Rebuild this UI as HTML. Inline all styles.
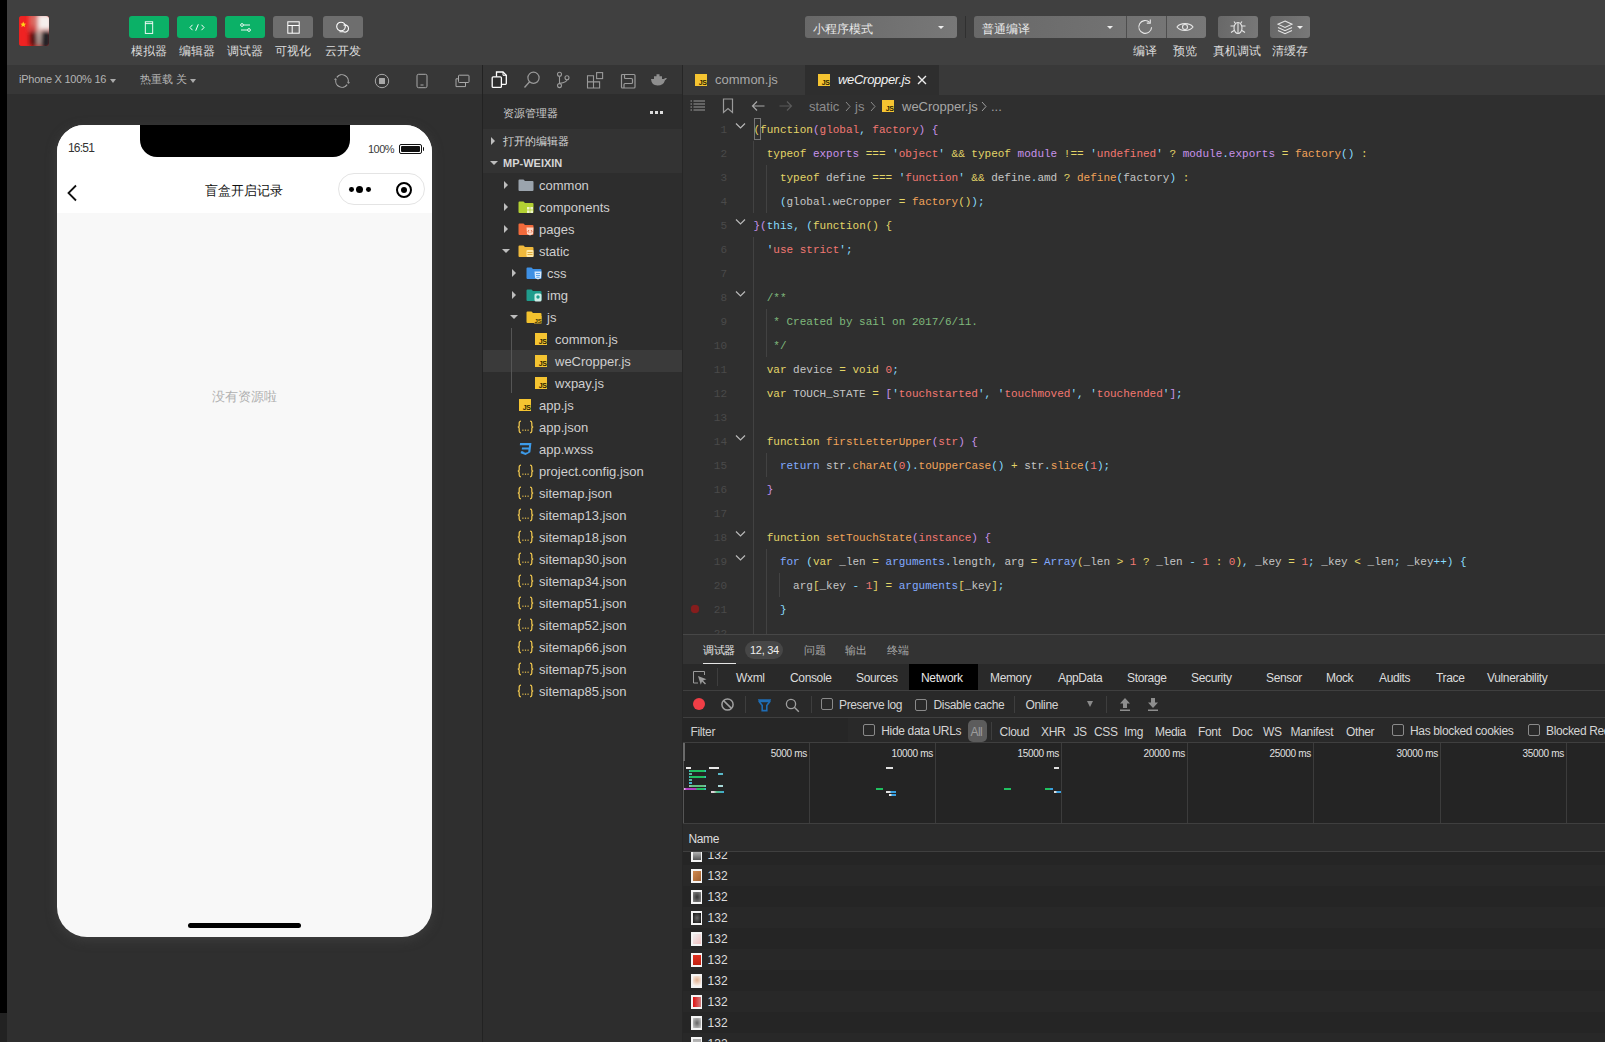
<!DOCTYPE html>
<html><head><meta charset="utf-8">
<style>
*{margin:0;padding:0;box-sizing:border-box}
html,body{width:1605px;height:1042px;overflow:hidden;background:#2f2f2f;font-family:"Liberation Sans",sans-serif;}
.a{position:absolute}
.t{position:absolute;white-space:nowrap}
#hdr{left:7px;top:0;width:1598px;height:65px;background:#404040}
.gbtn{position:absolute;top:16px;width:40px;height:22px;border-radius:3px;background:#0bb167}
.gbtn.g{background:#6e6e6e}
.lbl{position:absolute;top:44px;font-size:12px;line-height:14px;color:#dcdcdc;text-align:center}
.sel{position:absolute;top:16px;height:22px;background:linear-gradient(100deg,#686868,#787878);border-radius:3px}
#simbar{left:7px;top:65px;width:475px;height:29px;background:#373737}
#sim{left:7px;top:94px;width:475px;height:948px;background:#2f2f2f}
#side{left:482px;top:65px;width:201px;height:977px;background:#2b2b2b;border-left:1px solid #232323}
#tabs{left:683px;top:65px;width:922px;height:30px;background:#393939}
#ed{left:683px;top:95px;width:922px;height:539px;background:#2f2f2f}
#panel{left:683px;top:634px;width:922px;height:408px;background:#292929}
</style></head><body>
<div class="a" style="left:0;top:0;width:7px;height:1013px;background:#000"></div>
<div class="a" style="left:0;top:1013px;width:7px;height:29px;background:#222"></div>
<div id="hdr" class="a">
<svg class="a" style="left:12px;top:16px" width="30" height="30" viewBox="0 0 30 30"><defs><filter id="bl" x="-20%" y="-20%" width="140%" height="140%"><feGaussianBlur stdDeviation="2"/></filter><clipPath id="cp"><rect width="30" height="30" rx="3"/></clipPath></defs><g clip-path="url(#cp)"><rect width="30" height="30" fill="#d82a24"/><g filter="url(#bl)"><rect x="-2" y="-2" width="13" height="34" fill="#f02020"/><rect x="11" y="-2" width="10" height="14" fill="#d86a64"/><rect x="19" y="-2" width="14" height="16" fill="#f4eeec"/><path d="M10 30V16Q12 12 16 14L22 18V30Z" fill="#5a1418"/><path d="M22 16Q27 13 32 16V32H22Z" fill="#222226"/><path d="M18 12Q21 12 22 16L21 30H19Z" fill="#d8c8c0"/><rect x="9" y="10" width="8" height="6" fill="#d04040"/></g><path d="M4.2 5.6l0.9 1.9 2 0.2-1.5 1.3 0.5 2-1.9-1.1-1.8 1.1 0.5-2-1.5-1.3 2-0.2z" fill="#ffd21a"/></g></svg>
<div class="gbtn" style="left:122px"><svg class="a" style="left:15px;top:5px" width="10" height="13" viewBox="0 0 10 13"><rect x="1.3" y="0.8" width="7.4" height="11.6" fill="none" stroke="#fff" stroke-width="0.9"/><line x1="1.3" y1="2.6" x2="8.7" y2="2.6" stroke="#fff" stroke-width="0.9"/></svg></div>
<div class="gbtn" style="left:170px"><svg class="a" style="left:12px;top:8px" width="16" height="7" viewBox="0 0 16 7"><path d="M3.5 0.8L1 3.5l2.5 2.7M12.5 0.8L15 3.5l-2.5 2.7M9.3 0.3L6.7 6.7" fill="none" stroke="#fff" stroke-width="1"/></svg></div>
<div class="gbtn" style="left:218px"><svg class="a" style="left:15px;top:7px" width="11" height="9" viewBox="0 0 11 9"><circle cx="2" cy="2" r="1.4" fill="none" stroke="#fff" stroke-width="0.9"/><line x1="3.5" y1="2" x2="10" y2="2" stroke="#fff" stroke-width="0.9"/><circle cx="9" cy="7" r="1.4" fill="none" stroke="#fff" stroke-width="0.9"/><line x1="1" y1="7" x2="7.5" y2="7" stroke="#fff" stroke-width="0.9"/></svg></div>
<div class="gbtn g" style="left:266px"><svg class="a" style="left:14px;top:5px" width="13" height="13" viewBox="0 0 13 13"><rect x="0.8" y="0.8" width="11.4" height="11.4" fill="none" stroke="#fff" stroke-width="1"/><line x1="0.8" y1="4.5" x2="12.2" y2="4.5" stroke="#fff" stroke-width="1"/><line x1="5.2" y1="4.5" x2="5.2" y2="12.2" stroke="#fff" stroke-width="1"/></svg></div>
<div class="gbtn g" style="left:316px"><svg class="a" style="left:12px;top:5px" width="16" height="12" viewBox="0 0 16 12"><circle cx="6" cy="5.5" r="4.3" fill="none" stroke="#fff" stroke-width="1.1"/><path d="M8.5 4.2a3.6 3.6 0 1 1 0 6.6H4.5" fill="none" stroke="#fff" stroke-width="1.1"/></svg></div>
<div class="lbl" style="left:112px;width:60px">模拟器</div>
<div class="lbl" style="left:160px;width:60px">编辑器</div>
<div class="lbl" style="left:208px;width:60px">调试器</div>
<div class="lbl" style="left:256px;width:60px">可视化</div>
<div class="lbl" style="left:306px;width:60px">云开发</div>
<div class="sel" style="left:798px;width:152px"><span class="t" style="left:8px;top:5.5px;font-size:12px;line-height:14px;color:#e8e8e8">小程序模式</span><div class="a" style="left:133px;top:10px;border-left:3px solid transparent;border-right:3px solid transparent;border-top:3px solid #eee"></div></div>
<div class="a" style="left:958px;top:16px;width:1px;height:22px;background:#303030"></div>
<div class="sel" style="left:967px;width:232px;"></div>
<span class="t" style="left:975px;top:21.5px;font-size:12px;line-height:14px;color:#e8e8e8">普通编译</span>
<div class="a" style="left:1100px;top:26px;border-left:3px solid transparent;border-right:3px solid transparent;border-top:3px solid #eee"></div>
<div class="a" style="left:1119px;top:16px;width:1px;height:22px;background:#4e4e4e"></div>
<div class="a" style="left:1159px;top:16px;width:1px;height:22px;background:#4e4e4e"></div>
<svg class="a" style="left:1130px;top:18px" width="18" height="18" viewBox="0 0 18 18"><path d="M14.6 9.2a6.4 6.4 0 1 1-2-4.9" fill="none" stroke="#e6e6e6" stroke-width="1.1"/><path d="M13.3 1.6v3.5H9.8" fill="none" stroke="#e6e6e6" stroke-width="1.1"/></svg>
<svg class="a" style="left:1169px;top:21px" width="18" height="12" viewBox="0 0 18 12"><path d="M1 6C4 1.5 14 1.5 17 6C14 10.5 4 10.5 1 6Z" fill="none" stroke="#e6e6e6" stroke-width="1.1"/><circle cx="9" cy="6" r="2.5" fill="none" stroke="#e6e6e6" stroke-width="1.1"/></svg>
<div class="sel" style="left:1211px;width:40px"></div>
<svg class="a" style="left:1222px;top:19px" width="18" height="16" viewBox="0 0 18 16"><ellipse cx="9" cy="9" rx="4" ry="5.5" fill="none" stroke="#e6e6e6" stroke-width="1.1"/><line x1="9" y1="4" x2="9" y2="14" stroke="#e6e6e6" stroke-width="1.1"/><path d="M6.5 4.5L5 2.5M11.5 4.5L13 2.5M5 7H1.5M13 7h3.5M5 11.5L2 13.5M13 11.5l3 2" fill="none" stroke="#e6e6e6" stroke-width="1.1"/></svg>
<div class="sel" style="left:1263px;width:40px"></div>
<svg class="a" style="left:1270px;top:20px" width="16" height="15" viewBox="0 0 16 15"><path d="M8 1L15 4.2 8 7.4 1 4.2Z" fill="none" stroke="#e6e6e6" stroke-width="1.1"/><path d="M1 7.5L8 10.7 15 7.5M1 10.5L8 13.7 15 10.5" fill="none" stroke="#e6e6e6" stroke-width="1.1"/></svg>
<div class="a" style="left:1290px;top:26px;border-left:3px solid transparent;border-right:3px solid transparent;border-top:3px solid #eee"></div>
<div class="lbl" style="left:1108px;width:60px">编译</div>
<div class="lbl" style="left:1148px;width:60px">预览</div>
<div class="lbl" style="left:1200px;width:60px">真机调试</div>
<div class="lbl" style="left:1253px;width:60px">清缓存</div>
</div>
<div id="simbar" class="a">
<span class="t" style="left:12px;top:8px;font-size:11px;line-height:13px;color:#b4b4b4;letter-spacing:-0.25px">iPhone X 100% 16</span>
<div class="a" style="left:103px;top:14px;border-left:3px solid transparent;border-right:3px solid transparent;border-top:4px solid #aaa"></div>
<span class="t" style="left:133px;top:7px;font-size:11px;line-height:14px;color:#b4b4b4">热重载 关</span>
<div class="a" style="left:183px;top:14px;border-left:3px solid transparent;border-right:3px solid transparent;border-top:4px solid #aaa"></div>
<svg class="a" style="left:327px;top:8px" width="16" height="16" viewBox="0 0 16 16"><path d="M2.84 4.39A6.3 6.3 0 0 1 13.92 10.15M13.16 11.61A6.3 6.3 0 0 1 2.08 5.85" fill="none" stroke="#a8a8a8" stroke-width="1.1"/><path d="M13.92 10.15L15.52 9.54M2.08 5.85L0.48 6.46" fill="none" stroke="#a8a8a8" stroke-width="1.1"/></svg>
<svg class="a" style="left:367px;top:8px" width="16" height="16" viewBox="0 0 16 16"><circle cx="8" cy="8" r="6.7" fill="none" stroke="#a8a8a8" stroke-width="1"/><rect x="5" y="5" width="6" height="6" rx="0.5" fill="#a8a8a8"/></svg>
<svg class="a" style="left:409px;top:8px" width="12" height="16" viewBox="0 0 12 16"><rect x="1" y="1.3" width="10" height="13.4" rx="1.5" fill="none" stroke="#a8a8a8" stroke-width="1"/><line x1="4.5" y1="12" x2="7.5" y2="12" stroke="#a8a8a8" stroke-width="1"/></svg>
<svg class="a" style="left:447px;top:9px" width="16" height="14" viewBox="0 0 16 14"><rect x="4.5" y="1.2" width="10.5" height="7.3" rx="0.8" fill="none" stroke="#a8a8a8" stroke-width="1"/><path d="M4.5 4.8H2V12.6H11.5V8.5" fill="none" stroke="#a8a8a8" stroke-width="1"/></svg>
</div>
<div id="sim" class="a">
<div class="a" style="left:50px;top:31px;width:375px;height:812px;border-radius:27px 27px 30px 30px;background:#f8f8f8;overflow:hidden;box-shadow:0 3px 12px rgba(80,80,80,0.45)">
 <div class="a" style="left:0;top:0;width:375px;height:88px;background:#fff"></div>
 <div class="a" style="left:83px;top:0;width:210px;height:32px;background:#000;border-radius:0 0 17px 17px"></div>
 <span class="t" style="left:11px;top:16px;font-size:12px;line-height:14px;color:#333;letter-spacing:-0.8px">16:51</span>
 <span class="t" style="left:311px;top:18px;font-size:11px;line-height:12px;color:#3a3a3a;letter-spacing:-0.5px">100%</span>
 <div class="a" style="left:342px;top:19px;width:23px;height:10px;border:1.3px solid #111;border-radius:2px;padding:1px"><div style="width:100%;height:100%;background:#111;border-radius:1px"></div></div>
 <div class="a" style="left:365.5px;top:22px;width:1.8px;height:4px;background:#111;border-radius:0 1px 1px 0"></div>
 <svg class="a" style="left:9px;top:59px" width="12" height="18" viewBox="0 0 12 18"><path d="M10 1.5L2.5 9l7.5 7.5" fill="none" stroke="#111" stroke-width="1.8"/></svg>
 <span class="t" style="left:137px;top:57px;width:100px;text-align:center;font-size:13px;line-height:18px;color:#111">盲盒开启记录</span>
 <div class="a" style="left:281px;top:48px;width:87px;height:32px;border-radius:16px;border:1px solid #e4e4e4;background:#fff"></div>
 <div class="a" style="left:292px;top:62.1px;width:4.8px;height:4.8px;border-radius:50%;background:#000"></div>
 <div class="a" style="left:299.3px;top:61px;width:7px;height:7px;border-radius:50%;background:#000"></div>
 <div class="a" style="left:309.3px;top:62.1px;width:4.8px;height:4.8px;border-radius:50%;background:#000"></div>
 <div class="a" style="left:339px;top:57px;width:16px;height:16px;border-radius:50%;border:2.2px solid #000"></div>
 <div class="a" style="left:344px;top:62px;width:6px;height:6px;border-radius:50%;background:#000"></div>
 <span class="t" style="left:137px;top:264px;width:100px;text-align:center;font-size:13px;line-height:16px;color:#b0b0b0">没有资源啦</span>
 <div class="a" style="left:131px;top:798px;width:113px;height:5px;border-radius:3px;background:#000"></div>
</div>
</div>

<div class="a" style="left:482px;top:65px;width:201px;height:977px;background:#2d2d2d;border-left:1px solid #222;border-right:1px solid #262626"></div>
<div class="a" style="left:483px;top:129px;width:199px;height:44px;background:#333"></div>
<div class="a" style="left:483px;top:65px;width:199px;height:29px;background:#353535"></div>
<svg class="a" style="left:490px;top:71px" width="18" height="19" viewBox="0 0 18 19"><path d="M6.5 1H13L16.3 4.3V12.5Q16.3 13.3 15.5 13.3H7.3Q6.5 13.3 6.5 12.5Z" fill="#2e2e2e" stroke="#fff" stroke-width="1.3"/><path d="M13 1V4.3H16.3" fill="none" stroke="#fff" stroke-width="1"/><rect x="2.2" y="5.8" width="9.2" height="10.6" rx="1" fill="#2e2e2e" stroke="#fff" stroke-width="1.3"/></svg>
<svg class="a" style="left:523px;top:71px" width="18" height="18" viewBox="0 0 18 18"><circle cx="10.5" cy="6.8" r="5.6" fill="none" stroke="#9a9a9a" stroke-width="1.2"/><line x1="6.6" y1="10.8" x2="1.5" y2="16.5" stroke="#9a9a9a" stroke-width="1.3"/></svg>
<svg class="a" style="left:556px;top:71px" width="16" height="18" viewBox="0 0 16 18"><circle cx="3.5" cy="3.2" r="2" fill="none" stroke="#9a9a9a" stroke-width="1.1"/><circle cx="3.5" cy="14.6" r="2" fill="none" stroke="#9a9a9a" stroke-width="1.1"/><circle cx="11" cy="6.8" r="2" fill="none" stroke="#9a9a9a" stroke-width="1.1"/><path d="M3.5 5.2V12.6M11 8.8Q11 11.2 3.6 12.4" fill="none" stroke="#9a9a9a" stroke-width="1.1"/></svg>
<svg class="a" style="left:586px;top:71px" width="18" height="18" viewBox="0 0 18 18"><path d="M1.5 4.8H7.5V10.9H1.5ZM1.5 10.9H7.5V17H1.5ZM7.5 10.9H13.6V17H7.5Z" fill="none" stroke="#9a9a9a" stroke-width="1.1"/><rect x="10.6" y="1.6" width="6" height="6" fill="none" stroke="#9a9a9a" stroke-width="1.1"/></svg>
<svg class="a" style="left:620px;top:73px" width="16" height="16" viewBox="0 0 16 16"><rect x="1.5" y="1.5" width="13.5" height="13.5" rx="1" fill="none" stroke="#9a9a9a" stroke-width="1.2"/><path d="M4.5 1.5V4.5Q4.5 5.5 5.5 5.5H11.5Q12.5 5.5 12.5 6.5V9.5Q12.5 10.5 11.5 10.5H5Q4 10.5 4 11.5V15" fill="none" stroke="#9a9a9a" stroke-width="1.2"/></svg>
<svg class="a" style="left:650px;top:73px" width="18" height="14" viewBox="0 0 18 14"><path d="M1 6H14Q15 4.5 17 5.2Q16 6.8 15 7.2Q13.5 12.5 7.5 12.5Q1.5 12.5 1 6Z" fill="#8e8e8e"/><path d="M4 6V3.2H6.5V1.2H9.5V3.2H12V6Z" fill="#8e8e8e"/></svg>
<span class="t" style="left:503px;top:106px;font-size:11px;line-height:14px;color:#cccccc">资源管理器</span>
<div class="a" style="left:650px;top:111px;width:2.5px;height:2.5px;background:#ddd"></div>
<div class="a" style="left:655px;top:111px;width:2.5px;height:2.5px;background:#ddd"></div>
<div class="a" style="left:660px;top:111px;width:2.5px;height:2.5px;background:#ddd"></div>
<div class="a" style="left:491px;top:137px;border-top:4px solid transparent;border-bottom:4px solid transparent;border-left:4.5px solid #bdbdbd"></div>
<span class="t" style="left:503px;top:134px;font-size:11px;line-height:14px;color:#d6d6d6">打开的编辑器</span>
<div class="a" style="left:490px;top:161px;border-left:4px solid transparent;border-right:4px solid transparent;border-top:4.5px solid #bdbdbd"></div>
<span class="t" style="left:503px;top:156px;font-size:11px;line-height:14px;color:#d6d6d6;font-weight:bold">MP-WEIXIN</span>
<div class="a" style="left:483px;top:350px;width:199px;height:22px;background:#3a3a3a"></div>
<div class="a" style="left:511px;top:328px;width:1px;height:65px;background:#555"></div>
<div class="a" style="left:504px;top:181px;border-top:4px solid transparent;border-bottom:4px solid transparent;border-left:4.5px solid #bdbdbd"></div>
<svg class="a" style="left:518px;top:179px" width="16" height="13" viewBox="0 0 16 13"><path d="M0.5 1.5Q0.5 0.5 1.5 0.5H5.5L7 2H14.5Q15.5 2 15.5 3V11Q15.5 12 14.5 12H1.5Q0.5 12 0.5 11Z" fill="#9ba4ad"/></svg>
<span class="t" style="left:539px;top:178px;font-size:13px;line-height:16px;color:#cfcfcf">common</span>
<div class="a" style="left:504px;top:203px;border-top:4px solid transparent;border-bottom:4px solid transparent;border-left:4.5px solid #bdbdbd"></div>
<svg class="a" style="left:518px;top:201px" width="16" height="13" viewBox="0 0 16 13"><path d="M0.5 1.5Q0.5 0.5 1.5 0.5H5.5L7 2H14.5Q15.5 2 15.5 3V11Q15.5 12 14.5 12H1.5Q0.5 12 0.5 11Z" fill="#b3d133"/><rect x="9" y="6" width="2.6" height="2.6" fill="#eef5c8"/><rect x="12.4" y="6" width="2.6" height="2.6" fill="#eef5c8"/><rect x="9" y="9.4" width="2.6" height="2.6" fill="#eef5c8"/><rect x="12.4" y="9.4" width="2.6" height="2.6" fill="#eef5c8"/></svg>
<span class="t" style="left:539px;top:200px;font-size:13px;line-height:16px;color:#cfcfcf">components</span>
<div class="a" style="left:504px;top:225px;border-top:4px solid transparent;border-bottom:4px solid transparent;border-left:4.5px solid #bdbdbd"></div>
<svg class="a" style="left:518px;top:223px" width="16" height="13" viewBox="0 0 16 13"><path d="M0.5 1.5Q0.5 0.5 1.5 0.5H5.5L7 2H14.5Q15.5 2 15.5 3V11Q15.5 12 14.5 12H1.5Q0.5 12 0.5 11Z" fill="#f26a3b"/><path d="M8.5 4.5H15.5L15 11 12 12.5 9 11Z" fill="#ffd7c4"/><path d="M11 7L10 8.3 11 9.6M13 7L14 8.3 13 9.6" fill="none" stroke="#e0502a" stroke-width="0.8"/></svg>
<span class="t" style="left:539px;top:222px;font-size:13px;line-height:16px;color:#cfcfcf">pages</span>
<div class="a" style="left:502px;top:249px;border-left:4px solid transparent;border-right:4px solid transparent;border-top:4.5px solid #bdbdbd"></div>
<svg class="a" style="left:518px;top:245px" width="16" height="13" viewBox="0 0 16 13"><path d="M0.5 1.5Q0.5 0.5 1.5 0.5H5.5L7 2H14.5Q15.5 2 15.5 3V11Q15.5 12 14.5 12H1.5Q0.5 12 0.5 11Z" fill="#f0b93c"/><rect x="8.5" y="5" width="7" height="7" rx="1" fill="#ffe9a8"/><path d="M9.5 7.5H14.5M9.5 9.5H14.5" stroke="#d69a1e" stroke-width="0.8"/></svg>
<span class="t" style="left:539px;top:244px;font-size:13px;line-height:16px;color:#cfcfcf">static</span>
<div class="a" style="left:512px;top:269px;border-top:4px solid transparent;border-bottom:4px solid transparent;border-left:4.5px solid #bdbdbd"></div>
<svg class="a" style="left:526px;top:267px" width="16" height="13" viewBox="0 0 16 13"><path d="M0.5 1.5Q0.5 0.5 1.5 0.5H5.5L7 2H14.5Q15.5 2 15.5 3V11Q15.5 12 14.5 12H1.5Q0.5 12 0.5 11Z" fill="#3e90e4"/><path d="M8.5 4.5H15.5L15 11 12 12.5 9 11Z" fill="#d9ecff"/><path d="M10 6.5H14M10 8.5H14M10.5 10.3H13.5" stroke="#3e90e4" stroke-width="0.8"/></svg>
<span class="t" style="left:547px;top:266px;font-size:13px;line-height:16px;color:#cfcfcf">css</span>
<div class="a" style="left:512px;top:291px;border-top:4px solid transparent;border-bottom:4px solid transparent;border-left:4.5px solid #bdbdbd"></div>
<svg class="a" style="left:526px;top:289px" width="16" height="13" viewBox="0 0 16 13"><path d="M0.5 1.5Q0.5 0.5 1.5 0.5H5.5L7 2H14.5Q15.5 2 15.5 3V11Q15.5 12 14.5 12H1.5Q0.5 12 0.5 11Z" fill="#1f9c8c"/><rect x="8.5" y="4.5" width="7" height="8" rx="1.5" fill="#cdeee8"/><circle cx="12" cy="8" r="1.7" fill="#1f9c8c"/></svg>
<span class="t" style="left:547px;top:288px;font-size:13px;line-height:16px;color:#cfcfcf">img</span>
<div class="a" style="left:510px;top:315px;border-left:4px solid transparent;border-right:4px solid transparent;border-top:4.5px solid #bdbdbd"></div>
<svg class="a" style="left:526px;top:311px" width="16" height="13" viewBox="0 0 16 13"><path d="M0.5 1.5Q0.5 0.5 1.5 0.5H5.5L7 2H14.5Q15.5 2 15.5 3V11Q15.5 12 14.5 12H1.5Q0.5 12 0.5 11Z" fill="#f2c22e"/><rect x="8" y="5" width="7.5" height="7.5" fill="#f2c22e"/><text x="8.5" y="12" font-size="6" font-weight="bold" fill="#3a3000" font-family="Liberation Sans">JS</text></svg>
<span class="t" style="left:547px;top:310px;font-size:13px;line-height:16px;color:#cfcfcf">js</span>
<div class="a" style="left:535px;top:333px;width:12px;height:12px;background:#f5c431"><span class="t" style="right:0.5px;bottom:0.5px;font-size:7px;line-height:7px;color:#2a2200;font-weight:bold;letter-spacing:-0.4px">JS</span></div>
<span class="t" style="left:555px;top:332px;font-size:13px;line-height:16px;color:#cfcfcf">common.js</span>
<div class="a" style="left:535px;top:355px;width:12px;height:12px;background:#f5c431"><span class="t" style="right:0.5px;bottom:0.5px;font-size:7px;line-height:7px;color:#2a2200;font-weight:bold;letter-spacing:-0.4px">JS</span></div>
<span class="t" style="left:555px;top:354px;font-size:13px;line-height:16px;color:#cfcfcf">weCropper.js</span>
<div class="a" style="left:535px;top:377px;width:12px;height:12px;background:#f5c431"><span class="t" style="right:0.5px;bottom:0.5px;font-size:7px;line-height:7px;color:#2a2200;font-weight:bold;letter-spacing:-0.4px">JS</span></div>
<span class="t" style="left:555px;top:376px;font-size:13px;line-height:16px;color:#cfcfcf">wxpay.js</span>
<div class="a" style="left:519px;top:399px;width:12px;height:12px;background:#f5c431"><span class="t" style="right:0.5px;bottom:0.5px;font-size:7px;line-height:7px;color:#2a2200;font-weight:bold;letter-spacing:-0.4px">JS</span></div>
<span class="t" style="left:539px;top:398px;font-size:13px;line-height:16px;color:#cfcfcf">app.js</span>
<svg class="a" style="left:517px;top:420px" width="17" height="14" viewBox="0 0 17 14"><path d="M4 1.2Q2.2 1.2 2.2 3V5.5Q2.2 7 0.8 7Q2.2 7 2.2 8.5V11Q2.2 12.8 4 12.8M13 1.2Q14.8 1.2 14.8 3V5.5Q14.8 7 16.2 7Q14.8 7 14.8 8.5V11Q14.8 12.8 13 12.8" fill="none" stroke="#e8c14e" stroke-width="1.3"/><rect x="5.3" y="9.6" width="1.2" height="1.2" fill="#e8c14e"/><rect x="7.9" y="9.6" width="1.2" height="1.2" fill="#e8c14e"/><rect x="10.5" y="9.6" width="1.2" height="1.2" fill="#e8c14e"/></svg>
<span class="t" style="left:539px;top:420px;font-size:13px;line-height:16px;color:#cfcfcf">app.json</span>
<svg class="a" style="left:517.5px;top:442px" width="15" height="14" viewBox="0 0 13 13"><path d="M1.5 1H12L11 9.5 6.5 12 2 10.5 2.3 8.5H4.5L4.5 9.3 6.5 10 9 9.2 9.3 7H3L3.3 5H9.6L9.8 3H1.2Z" fill="#3d9be9"/></svg>
<span class="t" style="left:539px;top:442px;font-size:13px;line-height:16px;color:#cfcfcf">app.wxss</span>
<svg class="a" style="left:517px;top:464px" width="17" height="14" viewBox="0 0 17 14"><path d="M4 1.2Q2.2 1.2 2.2 3V5.5Q2.2 7 0.8 7Q2.2 7 2.2 8.5V11Q2.2 12.8 4 12.8M13 1.2Q14.8 1.2 14.8 3V5.5Q14.8 7 16.2 7Q14.8 7 14.8 8.5V11Q14.8 12.8 13 12.8" fill="none" stroke="#e8c14e" stroke-width="1.3"/><rect x="5.3" y="9.6" width="1.2" height="1.2" fill="#e8c14e"/><rect x="7.9" y="9.6" width="1.2" height="1.2" fill="#e8c14e"/><rect x="10.5" y="9.6" width="1.2" height="1.2" fill="#e8c14e"/></svg>
<span class="t" style="left:539px;top:464px;font-size:13px;line-height:16px;color:#cfcfcf">project.config.json</span>
<svg class="a" style="left:517px;top:486px" width="17" height="14" viewBox="0 0 17 14"><path d="M4 1.2Q2.2 1.2 2.2 3V5.5Q2.2 7 0.8 7Q2.2 7 2.2 8.5V11Q2.2 12.8 4 12.8M13 1.2Q14.8 1.2 14.8 3V5.5Q14.8 7 16.2 7Q14.8 7 14.8 8.5V11Q14.8 12.8 13 12.8" fill="none" stroke="#e8c14e" stroke-width="1.3"/><rect x="5.3" y="9.6" width="1.2" height="1.2" fill="#e8c14e"/><rect x="7.9" y="9.6" width="1.2" height="1.2" fill="#e8c14e"/><rect x="10.5" y="9.6" width="1.2" height="1.2" fill="#e8c14e"/></svg>
<span class="t" style="left:539px;top:486px;font-size:13px;line-height:16px;color:#cfcfcf">sitemap.json</span>
<svg class="a" style="left:517px;top:508px" width="17" height="14" viewBox="0 0 17 14"><path d="M4 1.2Q2.2 1.2 2.2 3V5.5Q2.2 7 0.8 7Q2.2 7 2.2 8.5V11Q2.2 12.8 4 12.8M13 1.2Q14.8 1.2 14.8 3V5.5Q14.8 7 16.2 7Q14.8 7 14.8 8.5V11Q14.8 12.8 13 12.8" fill="none" stroke="#e8c14e" stroke-width="1.3"/><rect x="5.3" y="9.6" width="1.2" height="1.2" fill="#e8c14e"/><rect x="7.9" y="9.6" width="1.2" height="1.2" fill="#e8c14e"/><rect x="10.5" y="9.6" width="1.2" height="1.2" fill="#e8c14e"/></svg>
<span class="t" style="left:539px;top:508px;font-size:13px;line-height:16px;color:#cfcfcf">sitemap13.json</span>
<svg class="a" style="left:517px;top:530px" width="17" height="14" viewBox="0 0 17 14"><path d="M4 1.2Q2.2 1.2 2.2 3V5.5Q2.2 7 0.8 7Q2.2 7 2.2 8.5V11Q2.2 12.8 4 12.8M13 1.2Q14.8 1.2 14.8 3V5.5Q14.8 7 16.2 7Q14.8 7 14.8 8.5V11Q14.8 12.8 13 12.8" fill="none" stroke="#e8c14e" stroke-width="1.3"/><rect x="5.3" y="9.6" width="1.2" height="1.2" fill="#e8c14e"/><rect x="7.9" y="9.6" width="1.2" height="1.2" fill="#e8c14e"/><rect x="10.5" y="9.6" width="1.2" height="1.2" fill="#e8c14e"/></svg>
<span class="t" style="left:539px;top:530px;font-size:13px;line-height:16px;color:#cfcfcf">sitemap18.json</span>
<svg class="a" style="left:517px;top:552px" width="17" height="14" viewBox="0 0 17 14"><path d="M4 1.2Q2.2 1.2 2.2 3V5.5Q2.2 7 0.8 7Q2.2 7 2.2 8.5V11Q2.2 12.8 4 12.8M13 1.2Q14.8 1.2 14.8 3V5.5Q14.8 7 16.2 7Q14.8 7 14.8 8.5V11Q14.8 12.8 13 12.8" fill="none" stroke="#e8c14e" stroke-width="1.3"/><rect x="5.3" y="9.6" width="1.2" height="1.2" fill="#e8c14e"/><rect x="7.9" y="9.6" width="1.2" height="1.2" fill="#e8c14e"/><rect x="10.5" y="9.6" width="1.2" height="1.2" fill="#e8c14e"/></svg>
<span class="t" style="left:539px;top:552px;font-size:13px;line-height:16px;color:#cfcfcf">sitemap30.json</span>
<svg class="a" style="left:517px;top:574px" width="17" height="14" viewBox="0 0 17 14"><path d="M4 1.2Q2.2 1.2 2.2 3V5.5Q2.2 7 0.8 7Q2.2 7 2.2 8.5V11Q2.2 12.8 4 12.8M13 1.2Q14.8 1.2 14.8 3V5.5Q14.8 7 16.2 7Q14.8 7 14.8 8.5V11Q14.8 12.8 13 12.8" fill="none" stroke="#e8c14e" stroke-width="1.3"/><rect x="5.3" y="9.6" width="1.2" height="1.2" fill="#e8c14e"/><rect x="7.9" y="9.6" width="1.2" height="1.2" fill="#e8c14e"/><rect x="10.5" y="9.6" width="1.2" height="1.2" fill="#e8c14e"/></svg>
<span class="t" style="left:539px;top:574px;font-size:13px;line-height:16px;color:#cfcfcf">sitemap34.json</span>
<svg class="a" style="left:517px;top:596px" width="17" height="14" viewBox="0 0 17 14"><path d="M4 1.2Q2.2 1.2 2.2 3V5.5Q2.2 7 0.8 7Q2.2 7 2.2 8.5V11Q2.2 12.8 4 12.8M13 1.2Q14.8 1.2 14.8 3V5.5Q14.8 7 16.2 7Q14.8 7 14.8 8.5V11Q14.8 12.8 13 12.8" fill="none" stroke="#e8c14e" stroke-width="1.3"/><rect x="5.3" y="9.6" width="1.2" height="1.2" fill="#e8c14e"/><rect x="7.9" y="9.6" width="1.2" height="1.2" fill="#e8c14e"/><rect x="10.5" y="9.6" width="1.2" height="1.2" fill="#e8c14e"/></svg>
<span class="t" style="left:539px;top:596px;font-size:13px;line-height:16px;color:#cfcfcf">sitemap51.json</span>
<svg class="a" style="left:517px;top:618px" width="17" height="14" viewBox="0 0 17 14"><path d="M4 1.2Q2.2 1.2 2.2 3V5.5Q2.2 7 0.8 7Q2.2 7 2.2 8.5V11Q2.2 12.8 4 12.8M13 1.2Q14.8 1.2 14.8 3V5.5Q14.8 7 16.2 7Q14.8 7 14.8 8.5V11Q14.8 12.8 13 12.8" fill="none" stroke="#e8c14e" stroke-width="1.3"/><rect x="5.3" y="9.6" width="1.2" height="1.2" fill="#e8c14e"/><rect x="7.9" y="9.6" width="1.2" height="1.2" fill="#e8c14e"/><rect x="10.5" y="9.6" width="1.2" height="1.2" fill="#e8c14e"/></svg>
<span class="t" style="left:539px;top:618px;font-size:13px;line-height:16px;color:#cfcfcf">sitemap52.json</span>
<svg class="a" style="left:517px;top:640px" width="17" height="14" viewBox="0 0 17 14"><path d="M4 1.2Q2.2 1.2 2.2 3V5.5Q2.2 7 0.8 7Q2.2 7 2.2 8.5V11Q2.2 12.8 4 12.8M13 1.2Q14.8 1.2 14.8 3V5.5Q14.8 7 16.2 7Q14.8 7 14.8 8.5V11Q14.8 12.8 13 12.8" fill="none" stroke="#e8c14e" stroke-width="1.3"/><rect x="5.3" y="9.6" width="1.2" height="1.2" fill="#e8c14e"/><rect x="7.9" y="9.6" width="1.2" height="1.2" fill="#e8c14e"/><rect x="10.5" y="9.6" width="1.2" height="1.2" fill="#e8c14e"/></svg>
<span class="t" style="left:539px;top:640px;font-size:13px;line-height:16px;color:#cfcfcf">sitemap66.json</span>
<svg class="a" style="left:517px;top:662px" width="17" height="14" viewBox="0 0 17 14"><path d="M4 1.2Q2.2 1.2 2.2 3V5.5Q2.2 7 0.8 7Q2.2 7 2.2 8.5V11Q2.2 12.8 4 12.8M13 1.2Q14.8 1.2 14.8 3V5.5Q14.8 7 16.2 7Q14.8 7 14.8 8.5V11Q14.8 12.8 13 12.8" fill="none" stroke="#e8c14e" stroke-width="1.3"/><rect x="5.3" y="9.6" width="1.2" height="1.2" fill="#e8c14e"/><rect x="7.9" y="9.6" width="1.2" height="1.2" fill="#e8c14e"/><rect x="10.5" y="9.6" width="1.2" height="1.2" fill="#e8c14e"/></svg>
<span class="t" style="left:539px;top:662px;font-size:13px;line-height:16px;color:#cfcfcf">sitemap75.json</span>
<svg class="a" style="left:517px;top:684px" width="17" height="14" viewBox="0 0 17 14"><path d="M4 1.2Q2.2 1.2 2.2 3V5.5Q2.2 7 0.8 7Q2.2 7 2.2 8.5V11Q2.2 12.8 4 12.8M13 1.2Q14.8 1.2 14.8 3V5.5Q14.8 7 16.2 7Q14.8 7 14.8 8.5V11Q14.8 12.8 13 12.8" fill="none" stroke="#e8c14e" stroke-width="1.3"/><rect x="5.3" y="9.6" width="1.2" height="1.2" fill="#e8c14e"/><rect x="7.9" y="9.6" width="1.2" height="1.2" fill="#e8c14e"/><rect x="10.5" y="9.6" width="1.2" height="1.2" fill="#e8c14e"/></svg>
<span class="t" style="left:539px;top:684px;font-size:13px;line-height:16px;color:#cfcfcf">sitemap85.json</span>
<div class="a" style="left:683px;top:95px;width:922px;height:539px;background:#2f2f2f"></div>
<div class="a" style="left:683px;top:65px;width:922px;height:30px;background:#393939"></div>
<div class="a" style="left:683px;top:65px;width:122px;height:30px;background:#383838"></div>
<div class="a" style="left:805px;top:65px;width:134px;height:30px;background:#2e2e2e"></div>
<div class="a" style="left:695px;top:74px;width:12px;height:12px;background:#f5c431"><span class="t" style="right:0.5px;bottom:0.5px;font-size:7px;line-height:7px;color:#2a2200;font-weight:bold;letter-spacing:-0.4px">JS</span></div>
<span class="t" style="left:715px;top:72px;font-size:13px;line-height:16px;color:#a8a8a8">common.js</span>
<div class="a" style="left:818px;top:74px;width:12px;height:12px;background:#f5c431"><span class="t" style="right:0.5px;bottom:0.5px;font-size:7px;line-height:7px;color:#2a2200;font-weight:bold;letter-spacing:-0.4px">JS</span></div>
<span class="t" style="left:838px;top:72px;font-size:13px;line-height:16px;color:#f2f2f2;font-style:italic;letter-spacing:-0.3px">weCropper.js</span>
<svg class="a" style="left:917px;top:75px" width="10" height="10" viewBox="0 0 10 10"><path d="M1 1L9 9M9 1L1 9" stroke="#eee" stroke-width="1.4"/></svg>
<svg class="a" style="left:690px;top:100px" width="16" height="12" viewBox="0 0 16 12"><path d="M3.5 1H15M3.5 4H15M3.5 7H15M3.5 10H15M0.5 1H2M0.5 4H2M0.5 7H2M0.5 10H2" stroke="#9a9a9a" stroke-width="1"/></svg>
<svg class="a" style="left:722px;top:98px" width="12" height="16" viewBox="0 0 12 16"><path d="M1.5 1H10.5V14.5L6 10.5 1.5 14.5Z" fill="none" stroke="#9a9a9a" stroke-width="1.2"/></svg>
<svg class="a" style="left:751px;top:100px" width="14" height="12" viewBox="0 0 14 12"><path d="M13.5 6H1.5M6 1.5L1.5 6 6 10.5" fill="none" stroke="#a8a8a8" stroke-width="1.2"/></svg>
<svg class="a" style="left:779px;top:100px" width="14" height="12" viewBox="0 0 14 12"><path d="M0.5 6H12.5M8 1.5L12.5 6 8 10.5" fill="none" stroke="#5a5a5a" stroke-width="1.2"/></svg>
<span class="t" style="left:809px;top:99px;font-size:13px;line-height:16px;color:#8c8c8c">static</span>
<svg class="a" style="left:845px;top:101px" width="6" height="11" viewBox="0 0 6 11"><path d="M1 1L5 5.5 1 10" fill="none" stroke="#8c8c8c" stroke-width="1"/></svg>
<span class="t" style="left:855px;top:99px;font-size:13px;line-height:16px;color:#8c8c8c">js</span>
<svg class="a" style="left:870px;top:101px" width="6" height="11" viewBox="0 0 6 11"><path d="M1 1L5 5.5 1 10" fill="none" stroke="#8c8c8c" stroke-width="1"/></svg>
<div class="a" style="left:882px;top:100px;width:12px;height:12px;background:#f5c431"><span class="t" style="right:0.5px;bottom:0.5px;font-size:7px;line-height:7px;color:#2a2200;font-weight:bold;letter-spacing:-0.4px">JS</span></div>
<span class="t" style="left:902px;top:99px;font-size:13px;line-height:16px;color:#a6a6a6">weCropper.js</span>
<svg class="a" style="left:981px;top:101px" width="6" height="11" viewBox="0 0 6 11"><path d="M1 1L5 5.5 1 10" fill="none" stroke="#a0a0a0" stroke-width="1"/></svg>
<span class="t" style="left:991px;top:99px;font-size:13px;line-height:16px;color:#a0a0a0">...</span>
<div class="a" style="left:683px;top:117px;width:922px;height:517px;overflow:hidden;font-family:'Liberation Mono',monospace;font-size:11px">
<div class="a" style="left:70px;top:24px;width:1px;height:72px;background:#424242"></div>
<div class="a" style="left:70px;top:120px;width:1px;height:432px;background:#424242"></div>
<div class="a" style="left:83px;top:48px;width:1px;height:48px;background:#424242"></div>
<div class="a" style="left:83px;top:192px;width:1px;height:48px;background:#424242"></div>
<div class="a" style="left:83px;top:336px;width:1px;height:24px;background:#424242"></div>
<div class="a" style="left:83px;top:432px;width:1px;height:120px;background:#424242"></div>
<div class="a" style="left:96px;top:456px;width:1px;height:24px;background:#424242"></div>
<span class="t" style="left:0px;top:6px;width:44px;text-align:right;line-height:14px;color:#4a4a4a">1</span>
<span class="t" style="left:70.5px;top:6px;line-height:14px;white-space:pre"><span style="color:#e3d567">(</span><span style="color:#e3d567">function</span><span style="color:#c792ea">(</span><span style="color:#f27872">global</span><span style="color:#89ddff">, </span><span style="color:#f27872">factory</span><span style="color:#c792ea">) </span><span style="color:#c792ea">{</span></span>
<span class="t" style="left:0px;top:30px;width:44px;text-align:right;line-height:14px;color:#4a4a4a">2</span>
<span class="t" style="left:83.7px;top:30px;line-height:14px;white-space:pre"><span style="color:#e3d567">typeof </span><span style="color:#c792ea">exports </span><span style="color:#e3d567">=== </span><span style="color:#89ddff">&#x27;</span><span style="color:#f27872">object</span><span style="color:#89ddff">&#x27; </span><span style="color:#e3d567">&amp;&amp; </span><span style="color:#e3d567">typeof </span><span style="color:#c792ea">module </span><span style="color:#e3d567">!== </span><span style="color:#89ddff">&#x27;</span><span style="color:#f27872">undefined</span><span style="color:#89ddff">&#x27; </span><span style="color:#e3d567">? </span><span style="color:#c792ea">module</span><span style="color:#89ddff">.</span><span style="color:#c792ea">exports </span><span style="color:#e3d567">= </span><span style="color:#f2a45a">factory</span><span style="color:#89ddff">() </span><span style="color:#e3d567">:</span></span>
<span class="t" style="left:0px;top:54px;width:44px;text-align:right;line-height:14px;color:#4a4a4a">3</span>
<span class="t" style="left:96.9px;top:54px;line-height:14px;white-space:pre"><span style="color:#e3d567">typeof </span><span style="color:#c6c6c6">define </span><span style="color:#e3d567">=== </span><span style="color:#89ddff">&#x27;</span><span style="color:#f27872">function</span><span style="color:#89ddff">&#x27; </span><span style="color:#e3d567">&amp;&amp; </span><span style="color:#c6c6c6">define</span><span style="color:#89ddff">.</span><span style="color:#c6c6c6">amd </span><span style="color:#e3d567">? </span><span style="color:#f2a45a">define</span><span style="color:#89ddff">(</span><span style="color:#c6c6c6">factory</span><span style="color:#89ddff">) </span><span style="color:#e3d567">:</span></span>
<span class="t" style="left:0px;top:78px;width:44px;text-align:right;line-height:14px;color:#4a4a4a">4</span>
<span class="t" style="left:96.9px;top:78px;line-height:14px;white-space:pre"><span style="color:#89ddff">(</span><span style="color:#c6c6c6">global</span><span style="color:#89ddff">.</span><span style="color:#c6c6c6">weCropper </span><span style="color:#e3d567">= </span><span style="color:#f2a45a">factory</span><span style="color:#e3d567">()</span><span style="color:#89ddff">)</span><span style="color:#89ddff">;</span></span>
<span class="t" style="left:0px;top:102px;width:44px;text-align:right;line-height:14px;color:#4a4a4a">5</span>
<span class="t" style="left:70.5px;top:102px;line-height:14px;white-space:pre"><span style="color:#c792ea">}</span><span style="color:#c792ea">(</span><span style="color:#89ddff">this</span><span style="color:#89ddff">, </span><span style="color:#89ddff">(</span><span style="color:#e3d567">function</span><span style="color:#e3d567">() </span><span style="color:#e3d567">{</span></span>
<span class="t" style="left:0px;top:126px;width:44px;text-align:right;line-height:14px;color:#4a4a4a">6</span>
<span class="t" style="left:83.7px;top:126px;line-height:14px;white-space:pre"><span style="color:#89ddff">&#x27;</span><span style="color:#f27872">use strict</span><span style="color:#89ddff">&#x27;</span><span style="color:#89ddff">;</span></span>
<span class="t" style="left:0px;top:150px;width:44px;text-align:right;line-height:14px;color:#4a4a4a">7</span>
<span class="t" style="left:0px;top:174px;width:44px;text-align:right;line-height:14px;color:#4a4a4a">8</span>
<span class="t" style="left:83.7px;top:174px;line-height:14px;white-space:pre"><span style="color:#7fb97c">/**</span></span>
<span class="t" style="left:0px;top:198px;width:44px;text-align:right;line-height:14px;color:#4a4a4a">9</span>
<span class="t" style="left:90.3px;top:198px;line-height:14px;white-space:pre"><span style="color:#7fb97c">* Created by sail on 2017/6/11.</span></span>
<span class="t" style="left:0px;top:222px;width:44px;text-align:right;line-height:14px;color:#4a4a4a">10</span>
<span class="t" style="left:90.3px;top:222px;line-height:14px;white-space:pre"><span style="color:#7fb97c">*/</span></span>
<span class="t" style="left:0px;top:246px;width:44px;text-align:right;line-height:14px;color:#4a4a4a">11</span>
<span class="t" style="left:83.7px;top:246px;line-height:14px;white-space:pre"><span style="color:#e3d567">var </span><span style="color:#c6c6c6">device </span><span style="color:#e3d567">= </span><span style="color:#e3d567">void </span><span style="color:#f27872">0</span><span style="color:#89ddff">;</span></span>
<span class="t" style="left:0px;top:270px;width:44px;text-align:right;line-height:14px;color:#4a4a4a">12</span>
<span class="t" style="left:83.7px;top:270px;line-height:14px;white-space:pre"><span style="color:#e3d567">var </span><span style="color:#c6c6c6">TOUCH_STATE </span><span style="color:#e3d567">= </span><span style="color:#c792ea">[</span><span style="color:#89ddff">&#x27;</span><span style="color:#f27872">touchstarted</span><span style="color:#89ddff">&#x27;, </span><span style="color:#89ddff">&#x27;</span><span style="color:#f27872">touchmoved</span><span style="color:#89ddff">&#x27;, </span><span style="color:#89ddff">&#x27;</span><span style="color:#f27872">touchended</span><span style="color:#89ddff">&#x27;</span><span style="color:#c792ea">]</span><span style="color:#89ddff">;</span></span>
<span class="t" style="left:0px;top:294px;width:44px;text-align:right;line-height:14px;color:#4a4a4a">13</span>
<span class="t" style="left:0px;top:318px;width:44px;text-align:right;line-height:14px;color:#4a4a4a">14</span>
<span class="t" style="left:83.7px;top:318px;line-height:14px;white-space:pre"><span style="color:#e3d567">function </span><span style="color:#f2a45a">firstLetterUpper</span><span style="color:#c792ea">(</span><span style="color:#f27872">str</span><span style="color:#c792ea">) </span><span style="color:#c792ea">{</span></span>
<span class="t" style="left:0px;top:342px;width:44px;text-align:right;line-height:14px;color:#4a4a4a">15</span>
<span class="t" style="left:96.9px;top:342px;line-height:14px;white-space:pre"><span style="color:#82aaff">return </span><span style="color:#c6c6c6">str</span><span style="color:#89ddff">.</span><span style="color:#f2a45a">charAt</span><span style="color:#89ddff">(</span><span style="color:#f27872">0</span><span style="color:#89ddff">)</span><span style="color:#89ddff">.</span><span style="color:#f2a45a">toUpperCase</span><span style="color:#89ddff">() </span><span style="color:#e3d567">+ </span><span style="color:#c6c6c6">str</span><span style="color:#89ddff">.</span><span style="color:#f2a45a">slice</span><span style="color:#89ddff">(</span><span style="color:#f27872">1</span><span style="color:#89ddff">)</span><span style="color:#89ddff">;</span></span>
<span class="t" style="left:0px;top:366px;width:44px;text-align:right;line-height:14px;color:#4a4a4a">16</span>
<span class="t" style="left:83.7px;top:366px;line-height:14px;white-space:pre"><span style="color:#c792ea">}</span></span>
<span class="t" style="left:0px;top:390px;width:44px;text-align:right;line-height:14px;color:#4a4a4a">17</span>
<span class="t" style="left:0px;top:414px;width:44px;text-align:right;line-height:14px;color:#4a4a4a">18</span>
<span class="t" style="left:83.7px;top:414px;line-height:14px;white-space:pre"><span style="color:#e3d567">function </span><span style="color:#f2a45a">setTouchState</span><span style="color:#c792ea">(</span><span style="color:#f27872">instance</span><span style="color:#c792ea">) </span><span style="color:#c792ea">{</span></span>
<span class="t" style="left:0px;top:438px;width:44px;text-align:right;line-height:14px;color:#4a4a4a">19</span>
<span class="t" style="left:96.9px;top:438px;line-height:14px;white-space:pre"><span style="color:#82aaff">for </span><span style="color:#89ddff">(</span><span style="color:#e3d567">var </span><span style="color:#c6c6c6">_len </span><span style="color:#e3d567">= </span><span style="color:#82aaff">arguments</span><span style="color:#89ddff">.</span><span style="color:#c6c6c6">length</span><span style="color:#89ddff">, </span><span style="color:#c6c6c6">arg </span><span style="color:#e3d567">= </span><span style="color:#82aaff">Array</span><span style="color:#e3d567">(</span><span style="color:#c6c6c6">_len </span><span style="color:#e3d567">&gt; </span><span style="color:#f27872">1 </span><span style="color:#e3d567">? </span><span style="color:#c6c6c6">_len </span><span style="color:#89ddff">- </span><span style="color:#f27872">1 </span><span style="color:#e3d567">: </span><span style="color:#f27872">0</span><span style="color:#e3d567">)</span><span style="color:#89ddff">, </span><span style="color:#c6c6c6">_key </span><span style="color:#e3d567">= </span><span style="color:#f27872">1</span><span style="color:#89ddff">; </span><span style="color:#c6c6c6">_key </span><span style="color:#e3d567">&lt; </span><span style="color:#c6c6c6">_len</span><span style="color:#89ddff">; </span><span style="color:#c6c6c6">_key</span><span style="color:#89ddff">++</span><span style="color:#89ddff">) </span><span style="color:#89ddff">{</span></span>
<span class="t" style="left:0px;top:462px;width:44px;text-align:right;line-height:14px;color:#4a4a4a">20</span>
<span class="t" style="left:110.1px;top:462px;line-height:14px;white-space:pre"><span style="color:#c6c6c6">arg</span><span style="color:#e3d567">[</span><span style="color:#c6c6c6">_key </span><span style="color:#89ddff">- </span><span style="color:#f27872">1</span><span style="color:#e3d567">]</span><span style="color:#e3d567"> = </span><span style="color:#82aaff">arguments</span><span style="color:#e3d567">[</span><span style="color:#c6c6c6">_key</span><span style="color:#e3d567">]</span><span style="color:#89ddff">;</span></span>
<span class="t" style="left:0px;top:486px;width:44px;text-align:right;line-height:14px;color:#4a4a4a">21</span>
<span class="t" style="left:96.9px;top:486px;line-height:14px;white-space:pre"><span style="color:#89ddff">}</span></span>
<span class="t" style="left:0px;top:510px;width:44px;text-align:right;line-height:14px;color:#4a4a4a">22</span>
<span class="t" style="left:0px;top:534px;width:44px;text-align:right;line-height:14px;color:#4a4a4a">23</span>
<svg class="a" style="left:52px;top:5px" width="11" height="8" viewBox="0 0 11 8"><path d="M1 1.5L5.5 6 10 1.5" fill="none" stroke="#b8b8b8" stroke-width="1.2"/></svg>
<svg class="a" style="left:52px;top:101px" width="11" height="8" viewBox="0 0 11 8"><path d="M1 1.5L5.5 6 10 1.5" fill="none" stroke="#b8b8b8" stroke-width="1.2"/></svg>
<svg class="a" style="left:52px;top:173px" width="11" height="8" viewBox="0 0 11 8"><path d="M1 1.5L5.5 6 10 1.5" fill="none" stroke="#b8b8b8" stroke-width="1.2"/></svg>
<svg class="a" style="left:52px;top:317px" width="11" height="8" viewBox="0 0 11 8"><path d="M1 1.5L5.5 6 10 1.5" fill="none" stroke="#b8b8b8" stroke-width="1.2"/></svg>
<svg class="a" style="left:52px;top:413px" width="11" height="8" viewBox="0 0 11 8"><path d="M1 1.5L5.5 6 10 1.5" fill="none" stroke="#b8b8b8" stroke-width="1.2"/></svg>
<svg class="a" style="left:52px;top:437px" width="11" height="8" viewBox="0 0 11 8"><path d="M1 1.5L5.5 6 10 1.5" fill="none" stroke="#b8b8b8" stroke-width="1.2"/></svg>
<div class="a" style="left:71px;top:1px;width:7px;height:22px;border:1px solid #777"></div>
<div class="a" style="left:8px;top:488px;width:8px;height:8px;border-radius:50%;background:#861d1d;box-shadow:0 0 1px #861d1d"></div>
</div>
<div class="a" style="left:683px;top:634px;width:922px;height:408px;background:#292929"></div>
<div class="a" style="left:683px;top:634px;width:922px;height:1px;background:#474747"></div>
<div class="a" style="left:683px;top:635px;width:922px;height:29px;background:#333"></div>
<span class="t" style="left:703px;top:642.5px;font-size:11px;line-height:15px;color:#e6e6e6;letter-spacing:-0.35px;">调试器</span>
<div class="a" style="left:703px;top:662.5px;width:33px;height:1.5px;background:#e6e6e6"></div>
<div class="a" style="left:745px;top:641px;width:38px;height:18px;border-radius:9px;background:#474747"></div>
<span class="t" style="left:750px;top:642.5px;font-size:11px;line-height:15px;color:#eeeeee;letter-spacing:-0.35px;letter-spacing:-0.3px">12, 34</span>
<span class="t" style="left:804px;top:642.5px;font-size:11px;line-height:15px;color:#a8a8a8;letter-spacing:-0.35px;">问题</span>
<span class="t" style="left:845px;top:642.5px;font-size:11px;line-height:15px;color:#a8a8a8;letter-spacing:-0.35px;">输出</span>
<span class="t" style="left:887px;top:642.5px;font-size:11px;line-height:15px;color:#a8a8a8;letter-spacing:-0.35px;">终端</span>
<div class="a" style="left:683px;top:690px;width:922px;height:1px;background:#3f3f3f"></div>
<svg class="a" style="left:692px;top:670px" width="16" height="16" viewBox="0 0 16 16"><path d="M6 13H1.5V1.5H12.5V5" fill="none" stroke="#9a9a9a" stroke-width="1"/><path d="M6 6L14.5 9.2 11 10.5 14 13.5 13 14.5 10 11.5 8.8 14.8Z" fill="#9a9a9a"/></svg>
<div class="a" style="left:717px;top:668px;width:1px;height:18px;background:#3e3e3e"></div>
<div class="a" style="left:909px;top:664px;width:69px;height:26px;background:#000"></div>
<span class="t" style="left:736px;top:669.5px;font-size:12px;line-height:16px;color:#dcdcdc;letter-spacing:-0.35px;">Wxml</span>
<span class="t" style="left:790px;top:669.5px;font-size:12px;line-height:16px;color:#dcdcdc;letter-spacing:-0.35px;">Console</span>
<span class="t" style="left:856px;top:669.5px;font-size:12px;line-height:16px;color:#dcdcdc;letter-spacing:-0.35px;">Sources</span>
<span class="t" style="left:921px;top:669.5px;font-size:12px;line-height:16px;color:#e8e8e8;letter-spacing:-0.35px;">Network</span>
<span class="t" style="left:990px;top:669.5px;font-size:12px;line-height:16px;color:#dcdcdc;letter-spacing:-0.35px;">Memory</span>
<span class="t" style="left:1058px;top:669.5px;font-size:12px;line-height:16px;color:#dcdcdc;letter-spacing:-0.35px;">AppData</span>
<span class="t" style="left:1127px;top:669.5px;font-size:12px;line-height:16px;color:#dcdcdc;letter-spacing:-0.35px;">Storage</span>
<span class="t" style="left:1191px;top:669.5px;font-size:12px;line-height:16px;color:#dcdcdc;letter-spacing:-0.35px;">Security</span>
<span class="t" style="left:1266px;top:669.5px;font-size:12px;line-height:16px;color:#dcdcdc;letter-spacing:-0.35px;">Sensor</span>
<span class="t" style="left:1326px;top:669.5px;font-size:12px;line-height:16px;color:#dcdcdc;letter-spacing:-0.35px;">Mock</span>
<span class="t" style="left:1379px;top:669.5px;font-size:12px;line-height:16px;color:#dcdcdc;letter-spacing:-0.35px;">Audits</span>
<span class="t" style="left:1436px;top:669.5px;font-size:12px;line-height:16px;color:#dcdcdc;letter-spacing:-0.35px;">Trace</span>
<span class="t" style="left:1487px;top:669.5px;font-size:12px;line-height:16px;color:#dcdcdc;letter-spacing:-0.35px;">Vulnerability</span>
<div class="a" style="left:683px;top:717px;width:922px;height:1px;background:#3f3f3f"></div>
<div class="a" style="left:693px;top:698px;width:12px;height:12px;border-radius:50%;background:#f03e46"></div>
<svg class="a" style="left:720px;top:697px" width="15" height="15" viewBox="0 0 15 15"><circle cx="7.5" cy="7.5" r="5.6" fill="none" stroke="#a0a0a0" stroke-width="1.5"/><line x1="3.6" y1="3.6" x2="11.4" y2="11.4" stroke="#a0a0a0" stroke-width="1.5"/></svg>
<div class="a" style="left:745px;top:696px;width:1px;height:17px;background:#3e3e3e"></div>
<svg class="a" style="left:757px;top:698px" width="15" height="14" viewBox="0 0 15 14"><path d="M0.8 1.2H14.2L12.8 4.2H2.2Z" fill="#1f6db5"/><path d="M1.8 3L5.2 7.5V12.6H9.8V7.5L13.2 3" fill="none" stroke="#1f6db5" stroke-width="1.6"/></svg>
<svg class="a" style="left:785px;top:698px" width="15" height="15" viewBox="0 0 15 15"><circle cx="6" cy="6" r="4.6" fill="none" stroke="#a0a0a0" stroke-width="1.3"/><line x1="9.3" y1="9.3" x2="13.8" y2="13.8" stroke="#a0a0a0" stroke-width="1.4"/></svg>
<div class="a" style="left:811px;top:696px;width:1px;height:17px;background:#3e3e3e"></div>
<div class="a" style="left:821px;top:698px;width:12px;height:12px;border:1px solid #8a8a8a;border-radius:2px"></div>
<span class="t" style="left:839px;top:697.0px;font-size:12px;line-height:16px;color:#d4d4d4;letter-spacing:-0.35px;">Preserve log</span>
<div class="a" style="left:915px;top:699px;width:12px;height:12px;border:1px solid #8a8a8a;border-radius:2px"></div>
<span class="t" style="left:933.5px;top:697.0px;font-size:12px;line-height:16px;color:#d4d4d4;letter-spacing:-0.35px;">Disable cache</span>
<div class="a" style="left:1014px;top:696px;width:1px;height:17px;background:#3e3e3e"></div>
<span class="t" style="left:1025.5px;top:697.0px;font-size:12px;line-height:16px;color:#d4d4d4;letter-spacing:-0.35px;">Online</span>
<div class="a" style="left:1087px;top:701px;border-left:3.5px solid transparent;border-right:3.5px solid transparent;border-top:6px solid #8a8a8a"></div>
<div class="a" style="left:1106px;top:696px;width:1px;height:17px;background:#3e3e3e"></div>
<svg class="a" style="left:1118px;top:697px" width="14" height="15" viewBox="0 0 14 15"><path d="M7 1L12 6.5H9V11H5V6.5H2Z" fill="#8e8e8e"/><rect x="2" y="12.5" width="10" height="1.5" fill="#8e8e8e"/></svg>
<svg class="a" style="left:1146px;top:697px" width="14" height="15" viewBox="0 0 14 15"><path d="M7 11L12 5.5H9V1H5V5.5H2Z" fill="#8e8e8e"/><rect x="2" y="12.5" width="10" height="1.5" fill="#8e8e8e"/></svg>
<div class="a" style="left:683px;top:718px;width:165px;height:24px;background:#262626"></div>
<div class="a" style="left:683px;top:742px;width:922px;height:1px;background:#3f3f3f"></div>
<span class="t" style="left:690.5px;top:723.5px;font-size:12px;line-height:16px;color:#cfcfcf;letter-spacing:-0.35px;">Filter</span>
<div class="a" style="left:863px;top:724px;width:12px;height:12px;border:1px solid #8a8a8a;border-radius:2px"></div>
<span class="t" style="left:881.3px;top:723.0px;font-size:12px;line-height:16px;color:#d4d4d4;letter-spacing:-0.35px;">Hide data URLs</span>
<div class="a" style="left:968px;top:720px;width:19px;height:22px;border-radius:5px;background:#5c5c5c"></div>
<span class="t" style="left:970.5px;top:724.0px;font-size:12px;line-height:16px;color:#9c9c9c;letter-spacing:-0.35px;letter-spacing:-0.6px">All</span>
<div class="a" style="left:991px;top:722px;width:1px;height:18px;background:#3e3e3e"></div>
<span class="t" style="left:999.6px;top:724.0px;font-size:12px;line-height:16px;color:#d4d4d4;letter-spacing:-0.35px;">Cloud</span>
<span class="t" style="left:1041px;top:724.0px;font-size:12px;line-height:16px;color:#d4d4d4;letter-spacing:-0.35px;">XHR</span>
<span class="t" style="left:1073.4px;top:724.0px;font-size:12px;line-height:16px;color:#d4d4d4;letter-spacing:-0.35px;">JS</span>
<span class="t" style="left:1094px;top:724.0px;font-size:12px;line-height:16px;color:#d4d4d4;letter-spacing:-0.35px;">CSS</span>
<span class="t" style="left:1124px;top:724.0px;font-size:12px;line-height:16px;color:#d4d4d4;letter-spacing:-0.35px;">Img</span>
<span class="t" style="left:1155px;top:724.0px;font-size:12px;line-height:16px;color:#d4d4d4;letter-spacing:-0.35px;">Media</span>
<span class="t" style="left:1198px;top:724.0px;font-size:12px;line-height:16px;color:#d4d4d4;letter-spacing:-0.35px;">Font</span>
<span class="t" style="left:1232px;top:724.0px;font-size:12px;line-height:16px;color:#d4d4d4;letter-spacing:-0.35px;">Doc</span>
<span class="t" style="left:1263px;top:724.0px;font-size:12px;line-height:16px;color:#d4d4d4;letter-spacing:-0.35px;">WS</span>
<span class="t" style="left:1290.6px;top:724.0px;font-size:12px;line-height:16px;color:#d4d4d4;letter-spacing:-0.35px;">Manifest</span>
<span class="t" style="left:1346px;top:724.0px;font-size:12px;line-height:16px;color:#d4d4d4;letter-spacing:-0.35px;">Other</span>
<div class="a" style="left:1392px;top:724px;width:12px;height:12px;border:1px solid #8a8a8a;border-radius:2px"></div>
<span class="t" style="left:1410px;top:723.0px;font-size:12px;line-height:16px;color:#d4d4d4;letter-spacing:-0.35px;">Has blocked cookies</span>
<div class="a" style="left:1528px;top:724px;width:12px;height:12px;border:1px solid #8a8a8a;border-radius:2px"></div>
<span class="t" style="left:1546px;top:723.0px;font-size:12px;line-height:16px;color:#d4d4d4;letter-spacing:-0.35px;">Blocked Requests</span>
<div class="a" style="left:683px;top:743px;width:922px;height:80px;background:#242424"></div>
<div class="a" style="left:683px;top:743px;width:1px;height:80px;background:#555"></div>
<div class="a" style="left:683px;top:743px;width:2px;height:18px;background:#6a6a6a"></div>
<div class="a" style="left:809px;top:743px;width:1px;height:80px;background:#3c3c3c"></div>
<span class="t" style="left:709px;top:747px;width:98px;text-align:right;font-size:10px;line-height:13px;color:#e0e0e0;letter-spacing:-0.3px">5000 ms</span>
<div class="a" style="left:935px;top:743px;width:1px;height:80px;background:#3c3c3c"></div>
<span class="t" style="left:835px;top:747px;width:98px;text-align:right;font-size:10px;line-height:13px;color:#e0e0e0;letter-spacing:-0.3px">10000 ms</span>
<div class="a" style="left:1061px;top:743px;width:1px;height:80px;background:#3c3c3c"></div>
<span class="t" style="left:961px;top:747px;width:98px;text-align:right;font-size:10px;line-height:13px;color:#e0e0e0;letter-spacing:-0.3px">15000 ms</span>
<div class="a" style="left:1187px;top:743px;width:1px;height:80px;background:#3c3c3c"></div>
<span class="t" style="left:1087px;top:747px;width:98px;text-align:right;font-size:10px;line-height:13px;color:#e0e0e0;letter-spacing:-0.3px">20000 ms</span>
<div class="a" style="left:1313px;top:743px;width:1px;height:80px;background:#3c3c3c"></div>
<span class="t" style="left:1213px;top:747px;width:98px;text-align:right;font-size:10px;line-height:13px;color:#e0e0e0;letter-spacing:-0.3px">25000 ms</span>
<div class="a" style="left:1440px;top:743px;width:1px;height:80px;background:#3c3c3c"></div>
<span class="t" style="left:1340px;top:747px;width:98px;text-align:right;font-size:10px;line-height:13px;color:#e0e0e0;letter-spacing:-0.3px">30000 ms</span>
<div class="a" style="left:1566px;top:743px;width:1px;height:80px;background:#3c3c3c"></div>
<span class="t" style="left:1466px;top:747px;width:98px;text-align:right;font-size:10px;line-height:13px;color:#e0e0e0;letter-spacing:-0.3px">35000 ms</span>
<div class="a" style="left:686px;top:767px;width:5px;height:2px;background:#e8e8e8"></div>
<div class="a" style="left:709px;top:767px;width:10px;height:2px;background:#e8e8e8"></div>
<div class="a" style="left:689px;top:770px;width:17px;height:2px;background:linear-gradient(90deg,#40b8e0 0,#20c060 8%,#20c060 88%,#40b8e0 100%)"></div>
<div class="a" style="left:689px;top:773px;width:3px;height:2px;background:#5ab8a0"></div>
<div class="a" style="left:718px;top:773px;width:5px;height:2px;background:#5ab8c8"></div>
<div class="a" style="left:689px;top:776px;width:17px;height:2px;background:linear-gradient(90deg,#40b8e0 0,#20c060 8%,#20c060 88%,#40b8e0 100%)"></div>
<div class="a" style="left:689px;top:779px;width:3px;height:2px;background:#5ab8a0"></div>
<div class="a" style="left:689px;top:782px;width:3px;height:2px;background:#40b8d0"></div>
<div class="a" style="left:689px;top:785px;width:17px;height:2px;background:linear-gradient(90deg,#a0c8b0 0,#60c080 20%,#60c080 85%,#80c0c8 100%)"></div>
<div class="a" style="left:718px;top:785px;width:5px;height:2px;background:#a8d8d8"></div>
<div class="a" style="left:684px;top:788px;width:22px;height:2px;background:linear-gradient(90deg,#f0d0f0 0,#b040c0 10%,#b040c0 55%,#20c060 58%,#20c060 88%,#40b8e0 100%)"></div>
<div class="a" style="left:711px;top:791px;width:13px;height:2px;background:linear-gradient(90deg,#e0d0d8 0,#e0d0d8 20%,#50c080 45%,#40a8d8 100%)"></div>
<div class="a" style="left:886px;top:767px;width:7px;height:2px;background:#e0e0e0"></div>
<div class="a" style="left:876px;top:788px;width:7px;height:2px;background:#20c060"></div>
<div class="a" style="left:886px;top:791px;width:10px;height:2px;background:linear-gradient(90deg,#e0e0e0 40%,#3aa0e0 50%)"></div>
<div class="a" style="left:889px;top:794px;width:7px;height:2px;background:linear-gradient(90deg,#e0e0e0 30%,#3aa0e0 40%)"></div>
<div class="a" style="left:1004px;top:788px;width:7px;height:2px;background:#20c060"></div>
<div class="a" style="left:1054px;top:767px;width:5px;height:2px;background:#e0e0e0"></div>
<div class="a" style="left:1045px;top:788px;width:8px;height:2px;background:linear-gradient(90deg,#20c060 60%,#3aa0e0 70%)"></div>
<div class="a" style="left:1054px;top:791px;width:7px;height:2px;background:linear-gradient(90deg,#e0e0e0 30%,#3aa0e0 40%)"></div>
<div class="a" style="left:683px;top:823px;width:922px;height:1px;background:#3f3f3f"></div>
<div class="a" style="left:683px;top:824px;width:922px;height:27px;background:#2b2b2b"></div>
<div class="a" style="left:683px;top:851px;width:922px;height:1px;background:#3f3f3f"></div>
<span class="t" style="left:688.4px;top:831.0px;font-size:12px;line-height:16px;color:#dedede;letter-spacing:-0.35px;">Name</span>
<div class="a" style="left:683px;top:852px;width:922px;height:190px;overflow:hidden">
<div class="a" style="left:0;top:-7.5px;width:922px;height:21px;background:#252525"></div>
<div class="a" style="left:8px;top:-4.0px;width:11px;height:14px;background:#f4f4f4;padding:2px 1.5px"><div style="width:100%;height:100%;background:linear-gradient(#ccc,#555)"></div></div>
<span class="t" style="left:24.6px;top:-5.0px;font-size:12px;line-height:16px;color:#dcdcdc">132</span>
<div class="a" style="left:0;top:13.4px;width:922px;height:21px;background:#282828"></div>
<div class="a" style="left:8px;top:16.9px;width:11px;height:14px;background:#f4f4f4;padding:2px 1.5px"><div style="width:100%;height:100%;background:linear-gradient(135deg,#d08a50,#a06030)"></div></div>
<span class="t" style="left:24.6px;top:15.9px;font-size:12px;line-height:16px;color:#dcdcdc">132</span>
<div class="a" style="left:0;top:34.4px;width:922px;height:21px;background:#252525"></div>
<div class="a" style="left:8px;top:37.9px;width:11px;height:14px;background:#f4f4f4;padding:2px 1.5px"><div style="width:100%;height:100%;background:radial-gradient(#333,#888)"></div></div>
<span class="t" style="left:24.6px;top:36.9px;font-size:12px;line-height:16px;color:#dcdcdc">132</span>
<div class="a" style="left:0;top:55.3px;width:922px;height:21px;background:#282828"></div>
<div class="a" style="left:8px;top:58.8px;width:11px;height:14px;background:#f4f4f4;padding:2px 1.5px"><div style="width:100%;height:100%;background:radial-gradient(#666,#111)"></div></div>
<span class="t" style="left:24.6px;top:57.8px;font-size:12px;line-height:16px;color:#dcdcdc">132</span>
<div class="a" style="left:0;top:76.3px;width:922px;height:21px;background:#252525"></div>
<div class="a" style="left:8px;top:79.8px;width:11px;height:14px;background:#f4f4f4;padding:2px 1.5px"><div style="width:100%;height:100%;background:linear-gradient(135deg,#eee,#f0c0c0)"></div></div>
<span class="t" style="left:24.6px;top:78.8px;font-size:12px;line-height:16px;color:#dcdcdc">132</span>
<div class="a" style="left:0;top:97.2px;width:922px;height:21px;background:#282828"></div>
<div class="a" style="left:8px;top:100.8px;width:11px;height:14px;background:#f4f4f4;padding:2px 1.5px"><div style="width:100%;height:100%;background:linear-gradient(#e03020,#c02010)"></div></div>
<span class="t" style="left:24.6px;top:99.8px;font-size:12px;line-height:16px;color:#dcdcdc">132</span>
<div class="a" style="left:0;top:118.2px;width:922px;height:21px;background:#252525"></div>
<div class="a" style="left:8px;top:121.7px;width:11px;height:14px;background:#f4f4f4;padding:2px 1.5px"><div style="width:100%;height:100%;background:radial-gradient(circle at 50% 40%,#e0b090,#fff)"></div></div>
<span class="t" style="left:24.6px;top:120.7px;font-size:12px;line-height:16px;color:#dcdcdc">132</span>
<div class="a" style="left:0;top:139.2px;width:922px;height:21px;background:#282828"></div>
<div class="a" style="left:8px;top:142.7px;width:11px;height:14px;background:#f4f4f4;padding:2px 1.5px"><div style="width:100%;height:100%;background:linear-gradient(90deg,#e01010,#d08080)"></div></div>
<span class="t" style="left:24.6px;top:141.7px;font-size:12px;line-height:16px;color:#dcdcdc">132</span>
<div class="a" style="left:0;top:160.1px;width:922px;height:21px;background:#252525"></div>
<div class="a" style="left:8px;top:163.6px;width:11px;height:14px;background:#f4f4f4;padding:2px 1.5px"><div style="width:100%;height:100%;background:radial-gradient(#666,#ccc)"></div></div>
<span class="t" style="left:24.6px;top:162.6px;font-size:12px;line-height:16px;color:#dcdcdc">132</span>
<div class="a" style="left:0;top:181.0px;width:922px;height:21px;background:#282828"></div>
<div class="a" style="left:8px;top:184.5px;width:11px;height:14px;background:#f4f4f4;padding:2px 1.5px"><div style="width:100%;height:100%;background:linear-gradient(#aaa,#ddd)"></div></div>
<span class="t" style="left:24.6px;top:183.5px;font-size:12px;line-height:16px;color:#dcdcdc">132</span>
</div>
</body></html>
